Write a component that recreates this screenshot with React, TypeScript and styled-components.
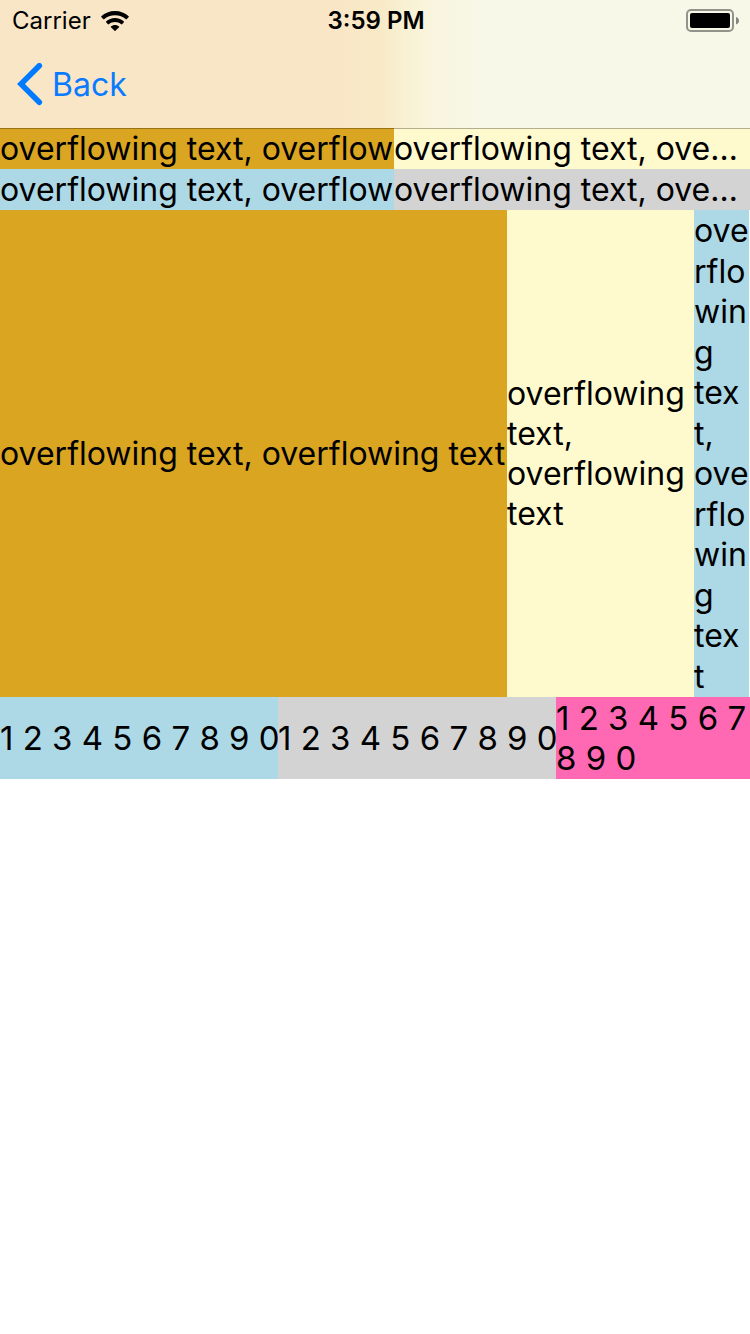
import React from "react";
import styled, { createGlobalStyle } from "styled-components";

const GlobalStyle = createGlobalStyle`
  body {
    margin: 0;
    background: #ffffff;
    color: #000000;
    font-family: Inter, "Liberation Sans", sans-serif;
  }
`;

const Header = styled.header`
  position: relative;
  background: linear-gradient(
    90deg,
    #f9e6c7 0%,
    #f9e6c7 45%,
    #f8eac7 51%,
    #f8f1d3 54%,
    #f9f5df 58%,
    #f7f8e7 64%,
    #f7f8e8 100%
  );
  box-shadow: 0 1px 0 rgba(0, 0, 0, 0.3);
`;

const StatusBar = styled.div`
  display: grid;
  grid-template-columns: 1fr auto 1fr;
  align-items: center;
  height: 42px;
  padding: 0 10px 0 12px;
  font-size: 24px;
  line-height: 40px;
`;

const Signal = styled.div`
  display: flex;
  align-items: center;
  gap: 10px;
`;

const Clock = styled.time`
  font-weight: 600;
`;

const Battery = styled.svg`
  justify-self: end;
`;

const NavBar = styled.nav`
  display: flex;
  align-items: center;
  height: 86px;
  padding: 0 16px;
`;

const BackButton = styled.button`
  display: flex;
  align-items: center;
  gap: 8px;
  padding: 0;
  border: 0;
  background: none;
  color: #0a7aff;
  font: inherit;
  font-size: 32px;
  line-height: 44px;
`;

const Row = styled.div<{ $columns: string; $height: number }>`
  display: grid;
  grid-template-columns: ${(p) => p.$columns};
  min-height: ${(p) => p.$height}px;
`;

const Cell = styled.div<{ $color: string }>`
  display: flex;
  align-items: center;
  min-width: 0;
  background: ${(p) => p.$color};
`;

const Label = styled.p<{ $wrap?: boolean; $size?: number }>`
  margin: 0;
  min-width: 0;
  font-size: ${(p) => p.$size ?? 32}px;
  line-height: ${(p) => (p.$wrap ? 40 : 41)}px;
  white-space: ${(p) => (p.$wrap ? "normal" : "nowrap")};
`;

const EllipsisLabel = styled(Label)`
  overflow: hidden;
  text-overflow: ellipsis;
`;

const StackedLabel = styled(Label)`
  display: flex;
  flex-direction: column;
  justify-content: space-between;
  align-self: stretch;
  padding-top: 1px;
`;

const TEXT = "overflowing text, overflowing text";
const CLIPPED = "overflowing text, overflow";
const FRAGMENTS = ["ove", "rflo", "win", "g", "tex", "t,", "ove", "rflo", "win", "g", "tex", "t"];
const DIGITS = "1 2 3 4 5 6 7 8 9 0";

export default function App() {
  return (
    <>
      <GlobalStyle />
      <Header>
        <StatusBar>
          <Signal>
            <span>Carrier</span>
            <svg width="28" height="21" viewBox="0 0 28 21" aria-label="Wi-Fi">
              <path d="M14 0C19.4 0 24.2 2 27.7 5.3Q28 5.7 27.7 6.1L25.7 8.2Q25.3 8.5 24.9 8.2C22 5.6 18.2 4.2 14 4.2S6 5.6 3.1 8.2Q2.7 8.5 2.3 8.2L0.3 6.1Q0 5.7 0.3 5.3C3.8 2 8.6 0 14 0Z" />
              <path d="M14 7C17.500 7 20.6 8.3 22.9 10.5Q23.3 10.9 22.9 11.3L21 13.3Q20.6 13.6 20.2 13.3C18.5 11.9 16.4 11.1 14 11.1S9.5 11.9 7.8 13.3Q7.4 13.6 7 13.3L5.1 11.3Q4.7 10.9 5.1 10.5C7.4 8.3 10.5 7 14 7Z" />
              <path d="M14 14C15.6 14 17 14.6 18.1 15.5Q18.5 15.9 18.1 16.2L14.4 19.8Q14 20.2 13.6 19.8L9.9 16.2Q9.5 15.9 9.9 15.5C11 14.6 12.4 14 14 14Z" />
            </svg>
          </Signal>
          <Clock>3:59 PM</Clock>
          <Battery width="54" height="24" viewBox="0 0 54 24" aria-label="Battery full">
            <rect x="1" y="1" width="46" height="21" rx="4" fill="none" stroke="#92938a" strokeWidth="2" />
            <rect x="4" y="4" width="40" height="15" rx="2" />
            <path d="M50 8C52 8.6 53 10 53 11.7S52 14.8 50 15.4Z" fill="#85867e" />
          </Battery>
        </StatusBar>
        <NavBar>
          <BackButton type="button">
            <svg width="28" height="44" viewBox="0 0 28 44" fill="none" aria-hidden="true">
              <path
                d="M23.3 2.8L5 21L23.3 39.2"
                stroke="#007aff"
                strokeWidth="5.6"
                strokeLinecap="round"
                strokeLinejoin="miter"
              />
            </svg>
            Back
          </BackButton>
        </NavBar>
      </Header>
      <main>
        <Row $columns="394fr 356fr" $height={41}>
          <Cell $color="goldenrod">
            <Label>{CLIPPED}</Label>
          </Cell>
          <Cell $color="lemonchiffon">
            <EllipsisLabel>{TEXT}</EllipsisLabel>
          </Cell>
        </Row>
        <Row $columns="394fr 356fr" $height={41}>
          <Cell $color="lightblue">
            <Label>{CLIPPED}</Label>
          </Cell>
          <Cell $color="lightgray">
            <EllipsisLabel>{TEXT}</EllipsisLabel>
          </Cell>
        </Row>
        <Row $columns="507fr 187fr 55fr 1fr" $height={487}>
          <Cell $color="goldenrod">
            <Label>{TEXT}</Label>
          </Cell>
          <Cell $color="lemonchiffon">
            <Label $wrap>{TEXT}</Label>
          </Cell>
          <Cell $color="lightblue">
            <StackedLabel $wrap>
              {FRAGMENTS.map((fragment, i) => (
                <span key={i}>{fragment}</span>
              ))}
            </StackedLabel>
          </Cell>
        </Row>
        <Row $columns="278fr 278fr 194fr" $height={82}>
          <Cell $color="lightblue">
            <Label $size={33}>{DIGITS}</Label>
          </Cell>
          <Cell $color="lightgray">
            <Label $size={33}>{DIGITS}</Label>
          </Cell>
          <Cell $color="hotpink">
            <Label $size={33} $wrap>{DIGITS}</Label>
          </Cell>
        </Row>
      </main>
    </>
  );
}
